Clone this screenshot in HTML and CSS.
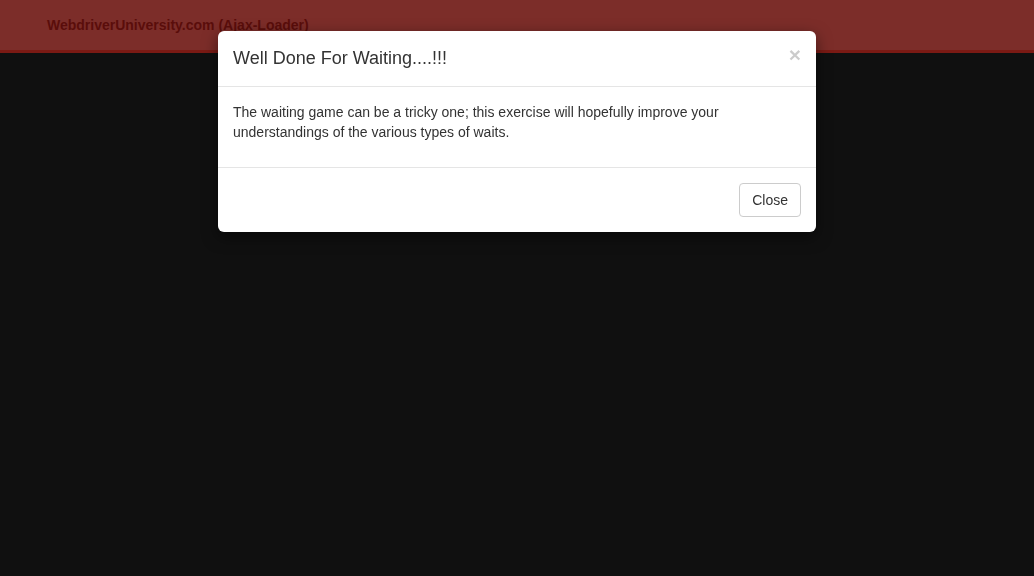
FILE: index.html
```html
<!DOCTYPE html>
<html>
<head>
<meta charset="utf-8">
<link rel="stylesheet" href="styles.css">
</head>
<body>
<nav class="navbar">
  <div class="brand">WebdriverUniversity.com (Ajax-Loader)</div>
</nav>
<div class="modal">
  <div class="modal-content">
    <div class="modal-header">
      <h4 class="modal-title">Well Done For Waiting....!!!</h4>
      <button class="close" type="button">&times;</button>
    </div>
    <div class="modal-body">
      <p>The waiting game can be a tricky one; this exercise will hopefully improve your understandings of the various types of waits.</p>
    </div>
    <div class="modal-footer">
      <button class="btn" type="button">Close</button>
    </div>
  </div>
</div>
</body>
</html>
```
FILE: styles.css
```css
html, body {
  margin: 0;
  padding: 0;
  height: 100%;
}
body {
  background: #101010;
  font-family: "Liberation Sans", Arial, sans-serif;
  font-size: 14px;
  line-height: 1.42857;
  color: #333;
}
.navbar {
  height: 50px;
  background: #7c2d29;
  border-bottom: 3px solid #7b1a14;
  display: flex;
  align-items: center;
}
.brand {
  margin-left: 47px;
  margin-top: 1px;
  font-weight: bold;
  font-size: 14px;
  color: #5a0d0b;
}
.modal {
  position: fixed;
  top: 0;
  left: 0;
  right: 0;
  display: flex;
  justify-content: center;
}
.modal-content {
  margin-top: 31px;
  width: 598px;
  background: #fff;
  border-radius: 6px;
  box-shadow: 0 5px 15px rgba(0,0,0,0.5);
}
.modal-header {
  display: flex;
  justify-content: space-between;
  align-items: flex-start;
  padding: 15px;
  border-bottom: 1px solid #e5e5e5;
}
.modal-title {
  margin: 0;
  font-size: 18px;
  font-weight: normal;
  line-height: 25px;
  color: #333;
}
.close {
  background: none;
  border: 0;
  padding: 0;
  margin-top: -2px;
  font-family: "Liberation Sans", Arial, sans-serif;
  font-size: 21px;
  font-weight: bold;
  line-height: 1;
  color: #000;
  opacity: 0.2;
  text-shadow: 0 1px 0 #fff;
  cursor: pointer;
}
.modal-body {
  padding: 16px 15px 14px;
}
.modal-body p {
  margin: 0 0 10px;
}
.modal-footer {
  display: flex;
  justify-content: flex-end;
  padding: 15px;
  border-top: 1px solid #e5e5e5;
}
.btn {
  font-family: "Liberation Sans", Arial, sans-serif;
  font-size: 14px;
  line-height: 20px;
  padding: 6px 12px;
  color: #333;
  background: #fff;
  border: 1px solid #ccc;
  border-radius: 4px;
  cursor: pointer;
}
```
